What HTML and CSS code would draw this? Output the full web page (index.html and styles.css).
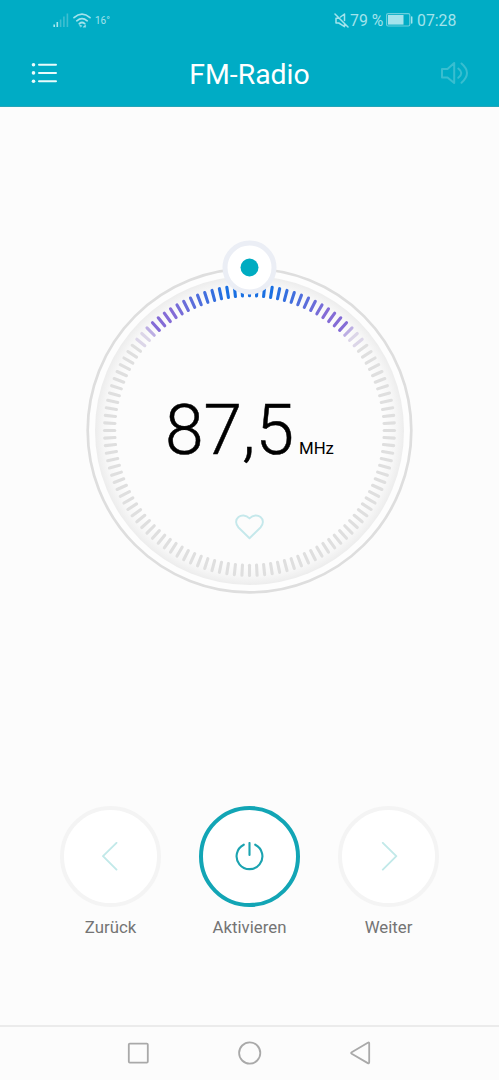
FILE: index.html
```
<!DOCTYPE html>
<html lang="de">
<head>
  <meta charset="UTF-8">
  <meta name="viewport" content="width=device-width, initial-scale=1">
  <title>FM-Radio</title>
  <link rel="stylesheet" href="styles.css">
</head>
<body>
  <header class="header">
    <div class="status">
      <svg class="signal" width="16" height="15" viewBox="0 0 16 15">
        <path class="on" d="M1.2 11.5V14M4.3 9V14"/>
        <path class="off" d="M7.6 6.5V14M10.9 3.5V14M14.4 0.5V14"/>
      </svg>
      <svg class="wifi" width="18" height="15" viewBox="0 0 18 15">
        <path d="M1 4.6Q9 -2.2 17 4.6M3.8 7.8Q9 3.4 14.2 7.8M6.3 10.6Q9 8.4 11.7 10.6"/>
        <path class="data" d="M6.6 11.8L8.9 12.8L7.8 14ZM10.2 14L12.6 11.8V14Z"/>
      </svg>
      <span class="temp">16°</span>
      <svg class="mute" width="15" height="15" viewBox="0 0 15 15">
        <path d="M1 1L14 14M4.5 5.2H2V10H4.8L10.5 13.7V11M6.5 4L10.5 1V7.5"/>
      </svg>
      <span class="percent">79 %</span>
      <svg class="battery" width="27" height="14" viewBox="0 0 27 14">
        <rect class="case" x=".6" y=".6" width="23.2" height="12.4" rx="1.5"/>
        <rect class="level" x="2" y="2" width="15.5" height="9.6"/>
        <path class="tip" d="M25.7 4V10"/>
      </svg>
      <span class="clock">07:28</span>
    </div>
    <div class="toolbar">
      <svg class="menu" width="28" height="22" viewBox="0 0 28 22">
        <path d="M8 2.7H25M8 10.9H25M8 19.2H25"/>
        <circle cx="2.5" cy="2.7" r="1.8"/>
        <circle cx="2.5" cy="10.9" r="1.8"/>
        <circle cx="2.5" cy="19.2" r="1.8"/>
      </svg>
      <h1>FM-Radio</h1>
      <svg class="speaker" width="30" height="24" viewBox="0 0 30 24">
        <path d="M2 8H7.5L14.2 2V22L7.5 16.5H2ZM18.3 7.5Q24.3 12 18.3 16.8M21.5 2.5Q32.5 12 21.5 21.8"/>
      </svg>
    </div>
  </header>

  <main class="radio">
    <div class="dial">
      <svg class="scale" width="327" height="327" viewBox="-163.5 -163.5 327 327">
        <defs>
          <radialGradient id="shade" gradientUnits="userSpaceOnUse" cx="0" cy="0" r="155">
            <stop offset="0.88" stop-color="#fcfcfc"/>
            <stop offset="0.94" stop-color="#f7f7f7"/>
            <stop offset="1" stop-color="#ececec"/>
          </radialGradient>
        </defs>
        <circle class="ring" r="161.8"/>
        <circle r="154.5" fill="url(#shade)"/>
        <g id="ticks"></g>
        <circle class="knob" cy="-163" r="24.5"/>
        <circle class="dot" cy="-163" r="9"/>
      </svg>
      <div class="frequency"><span class="value">87,5</span><span class="unit">MHz</span></div>
      <svg class="heart" width="31" height="26" viewBox="0 0 31 26">
        <path d="M15.5 24.3L4.5 13.5C-2.7 5.5 8-3.2 15.5 4.4C23-3.2 33.7 5.5 26.5 13.5Z"/>
      </svg>
    </div>
  </main>

  <section class="controls">
    <div class="control">
      <button class="round">
        <svg width="30" height="30" viewBox="0 0 30 30"><path d="M20.5 0.8L7 14.2L20.5 27.6"/></svg>
      </button>
      <span>Zurück</span>
    </div>
    <div class="control">
      <button class="round active">
        <svg width="30" height="30" viewBox="0 0 30 30"><path d="M8.8 2.7A12.9 12.9 0 1 0 20.2 2.7M14.5 1V13"/></svg>
      </button>
      <span>Aktivieren</span>
    </div>
    <div class="control">
      <button class="round">
        <svg width="30" height="30" viewBox="0 0 30 30"><path d="M8.8 0.8L22.3 14.2L8.8 27.6"/></svg>
      </button>
      <span>Weiter</span>
    </div>
  </section>

  <nav class="navbar">
    <svg width="24" height="24" viewBox="0 0 24 24"><rect x="2.8" y="2.6" width="19" height="19" rx="1"/></svg>
    <svg width="24" height="24" viewBox="0 0 24 24"><circle cx="11.7" cy="12" r="10.6"/></svg>
    <svg width="24" height="24" viewBox="0 0 24 24"><path d="M2.7 11.2L18.8 1.7Q20.2 1 20.2 2.3V21.3Q20.2 22.8 18.8 22.1L2.7 12.8Q1.5 12 2.7 11.2Z"/></svg>
  </nav>

  <script>
    // 120 ticks, one every 3 degrees, coloured around the knob
    const ticks = document.getElementById('ticks');
    function tickColor(n) {
      if (n > 17) return '#dfdfdf';
      if (n > 15) return '#dcd6e8';
      if (n === 15) return '#bcaee3';
      const k = Math.min(1, Math.max(0, (n - 3) / 8));
      return `rgb(${26 + 106 * k}, ${112 - 4 * k}, ${226 - 12 * k})`;
    }
    for (let i = 0; i < 120; i++) {
      const line = document.createElementNS('http://www.w3.org/2000/svg', 'line');
      line.setAttribute('y1', -145);
      line.setAttribute('y2', -134.7);
      line.setAttribute('transform', `rotate(${i * 3})`);
      line.setAttribute('stroke', tickColor(Math.min(i, 120 - i)));
      ticks.appendChild(line);
    }
  </script>
</body>
</html>
```
FILE: styles.css
```
* {
  box-sizing: border-box;
}
body {
  margin: 0;
  height: 1080px;
  display: flex;
  flex-direction: column;
  background: #fcfcfc;
  font-family: Roboto, "Liberation Sans", sans-serif;
  overflow: hidden;
}
svg {
  display: block;
  flex: none;
  fill: none;
  stroke-linecap: round;
  stroke-linejoin: round;
}
/* Header */
.header {
  height: 107px;
  background: #00acc5;
  border-bottom: 1px solid #25a5b8;
}
.status {
  height: 40px;
  padding: 0 43px 0 53px;
  display: flex;
  align-items: center;
  color: #a3e3ec;
  font-size: 16px;
}
.signal {
  stroke-width: 1.6;
  stroke-linecap: butt;
}
.signal .on {
  stroke: #a8e8ef;
}
.signal .off {
  stroke: #3fbfd1;
}
.wifi {
  margin-left: 4px;
  stroke: #a3e3ec;
  stroke-width: 1.7;
}
.wifi .data {
  fill: #a3e3ec;
  stroke-width: 0.5;
}
.temp {
  margin-left: 4px;
  font-size: 10px;
}
.mute {
  margin-left: auto;
  stroke: #a3e3ec;
  stroke-width: 1.5;
}
.percent {
  margin-left: 1px;
  width: 33px;
  font-size: 15.8px;
  line-height: 19px;
  white-space: nowrap;
}
.battery {
  margin-left: 3px;
}
.battery .case {
  stroke: #6ccfdd;
  stroke-width: 1.2;
}
.battery .level {
  fill: #a3e3ec;
}
.battery .tip {
  stroke: #a3e3ec;
  stroke-width: 1.5;
}
.clock {
  margin-left: 4px;
  width: 39px;
  font-size: 15.8px;
  line-height: 19px;
}
.toolbar {
  height: 66px;
  padding: 0 29px 0 31px;
  display: flex;
  align-items: center;
  justify-content: space-between;
}
.toolbar h1 {
  margin: 3px 0 0;
  color: #fff;
  font-size: 28.4px;
  font-weight: 400;
}
.menu {
  stroke: #e9fbfc;
  stroke-width: 2;
}
.menu circle {
  fill: #e9fbfc;
  stroke: none;
}
.speaker {
  stroke: #38bed0;
  stroke-width: 2;
}
/* Tuning dial */
.radio {
  height: 699px;
  padding-top: 160px;
  display: flex;
  justify-content: center;
}
.dial {
  position: relative;
  width: 327px;
  height: 327px;
}
.scale {
  overflow: visible;
}
.ring {
  fill: #fdfdfd;
  stroke: #dedede;
  stroke-width: 2.7;
}
#ticks {
  stroke-width: 3.1;
}
.knob {
  fill: #fff;
  stroke: #ebeef5;
  stroke-width: 5;
}
.dot {
  fill: #00acc1;
}
.frequency {
  position: absolute;
  left: 79px;
  top: 123px;
  display: flex;
  align-items: baseline;
  color: #000;
  white-space: nowrap;
}
.value {
  font-size: 69.5px;
  font-weight: 300;
  line-height: 82px;
  -webkit-text-stroke: 0.5px #000;
}
.unit {
  margin-left: 5px;
  font-size: 16.8px;
}
.heart {
  position: absolute;
  left: 148px;
  top: 247px;
  stroke: #c5e8eb;
  stroke-width: 1.9;
}
/* Buttons */
.controls {
  height: 219px;
  padding: 0 60px;
  display: flex;
  justify-content: space-between;
}
.control {
  width: 101px;
  display: flex;
  flex-direction: column;
  align-items: center;
  color: #747474;
  font-size: 16.8px;
}
.control span {
  margin-top: 10px;
  line-height: 20px;
}
.round {
  width: 101px;
  height: 101px;
  flex: none;
  padding: 0;
  display: flex;
  align-items: center;
  justify-content: center;
  border: 4px solid #f4f4f4;
  border-radius: 50%;
  background: #fff;
}
.round svg {
  stroke: #c2e9e9;
  stroke-width: 1.9;
}
.round.active {
  border-color: #12a5b5;
}
.round.active svg {
  stroke: #1ba3b0;
  stroke-width: 2.1;
}
/* System navigation */
.navbar {
  height: 55px;
  padding: 0 126px 2px;
  display: flex;
  align-items: center;
  justify-content: space-between;
  border-top: 2px solid #ebebeb;
}
.navbar svg {
  stroke: #a9a9a9;
  stroke-width: 1.8;
}
```
